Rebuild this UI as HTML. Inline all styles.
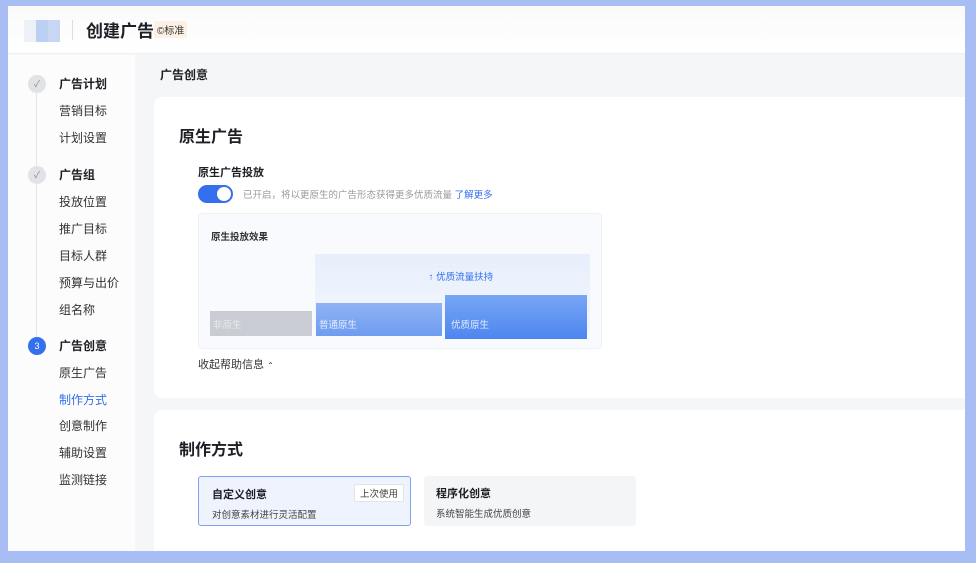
<!DOCTYPE html><html><head><meta charset="utf-8"><style>
*{margin:0;padding:0;box-sizing:border-box}
body{width:976px;height:563px;background:#a9bdf5;font-family:"Liberation Sans","Noto Sans CJK SC",sans-serif;position:relative;overflow:hidden;color:#1d1f24}
.a{position:absolute}
#win{left:8px;top:6px;width:957px;height:545px;background:#f5f6f8;overflow:hidden}
.hd{left:0;top:0;width:957px;height:48px;background:linear-gradient(#fafafa,#fff);border-bottom:1px solid #eef0f3}
.sb{left:0;top:49px;width:127px;height:500px;background:#fcfcfd}
.card{background:#fff;border-radius:8px}
.st{font-size:12px;color:#333}
.sh{font-size:12px;font-weight:bold}
.dot{width:18px;height:18px;border-radius:50%;background:#e1e3e6;color:#888;font-size:9px;text-align:center;line-height:18px}
</style></head><body>
<div id="win" class="a">
<div class="a hd">
<div class="a" style="left:16px;top:14px;width:36px;height:22px;background:linear-gradient(90deg,#eef0f8 0 12px,#bcd0f4 12px 24px,#c8d6f4 24px)"></div>
<div class="a" style="left:64px;top:14px;width:1px;height:20px;background:#ddd"></div>
<div class="a" style="left:78px;top:11px;font-size:17px;font-weight:bold">创建广告</div>
<div class="a" style="left:146px;top:15px;font-size:10px;background:#fdf1e6;padding:1px 3px;color:#333">©标准</div>
</div>
<div class="a sb">
<div class="a" style="left:28px;top:36px;width:1px;height:80px;background:#e5e6e8"></div>
<div class="a" style="left:28px;top:128px;width:1px;height:155px;background:#e5e6e8"></div>
<div class="a dot" style="left:20px;top:20px">✓</div>
<div class="a sh" style="left:51px;top:20px">广告计划</div>
<div class="a st" style="left:51px;top:47px">营销目标</div>
<div class="a st" style="left:51px;top:74px">计划设置</div>
<div class="a dot" style="left:20px;top:111px">✓</div>
<div class="a sh" style="left:51px;top:111px">广告组</div>
<div class="a st" style="left:51px;top:138px">投放位置</div>
<div class="a st" style="left:51px;top:165px">推广目标</div>
<div class="a st" style="left:51px;top:192px">目标人群</div>
<div class="a st" style="left:51px;top:219px">预算与出价</div>
<div class="a st" style="left:51px;top:246px">组名称</div>
<div class="a dot" style="left:20px;top:282px;background:#3470ee;color:#fff">3</div>
<div class="a sh" style="left:51px;top:282px">广告创意</div>
<div class="a st" style="left:51px;top:309px">原生广告</div>
<div class="a st" style="left:51px;top:336px;color:#3470ee">制作方式</div>
<div class="a st" style="left:51px;top:362px">创意制作</div>
<div class="a st" style="left:51px;top:389px">辅助设置</div>
<div class="a st" style="left:51px;top:416px">监测链接</div>
</div>
<div class="a sh" style="left:152px;top:60px">广告创意</div>
<div class="a card" style="left:146px;top:91px;width:830px;height:301px">
<div class="a" style="left:25px;top:26px;font-size:16px;font-weight:bold">原生广告</div>
<div class="a sh" style="left:44px;top:67px;font-size:11px">原生广告投放</div>
<div class="a" style="left:44px;top:88px;width:35px;height:18px;border-radius:9px;background:#3470ee"><div class="a" style="right:2px;top:2px;width:14px;height:14px;border-radius:50%;background:#fff"></div></div>
<div class="a" style="left:89px;top:90px;font-size:9.5px;color:#999">已开启，将以更原生的广告形态获得更多优质流量 <span style="color:#3470ee">了解更多</span></div>
<div class="a" style="left:44px;top:116px;width:404px;height:136px;background:#f8fafd;border:1px solid #eef1f6;border-radius:4px">
<div class="a" style="left:12px;top:15px;font-size:9.5px;font-weight:bold;color:#333">原生投放效果</div>
<div class="a" style="left:116px;top:40px;width:275px;height:78px;background:linear-gradient(#e7effc,#f3f6fc)"></div>
<div class="a" style="left:0;top:55px;width:404px;text-align:center;padding-left:120px;font-size:9.5px;color:#3470ee">↑ 优质流量扶持</div>
<div class="a" style="left:11px;top:97px;width:102px;height:25px;background:#c9cdd3;color:#e8eaee;font-size:9.5px;padding:6px 3px">非原生</div>
<div class="a" style="left:117px;top:89px;width:126px;height:33px;background:linear-gradient(#8fb3f4,#6f9cf0);color:#e3ecfd;font-size:9.5px;padding:14px 3px">普通原生</div>
<div class="a" style="left:246px;top:81px;width:142px;height:41px;background:linear-gradient(#78a6f6,#4d86ef);color:#e3ecfd;font-size:9.5px;padding:22px 6px">优质原生</div>
</div>
<div class="a" style="left:44px;top:259px;font-size:11px;color:#333">收起帮助信息 <span style="font-size:8px">⌃</span></div>
</div>
<div class="a card" style="left:146px;top:404px;width:830px;height:160px">
<div class="a" style="left:25px;top:26px;font-size:16px;font-weight:bold">制作方式</div>
<div class="a" style="left:44px;top:66px;width:213px;height:50px;background:#eef3fd;border:1px solid #7ea2ec;border-radius:3px">
<div class="a" style="left:13px;top:9px;font-size:11px;font-weight:bold">自定义创意</div>
<div class="a" style="left:13px;top:30px;font-size:9.5px;color:#444">对创意素材进行灵活配置</div>
<div class="a" style="left:155px;top:7px;font-size:9.5px;background:#fff;border:1px solid #e2e4e8;border-radius:2px;padding:1px 5px;color:#444">上次使用</div>
</div>
<div class="a" style="left:270px;top:66px;width:212px;height:50px;background:#f4f5f7;border-radius:3px">
<div class="a" style="left:12px;top:9px;font-size:11px;font-weight:bold">程序化创意</div>
<div class="a" style="left:12px;top:30px;font-size:9.5px;color:#444">系统智能生成优质创意</div>
</div>
</div>
</div>
</body></html>
